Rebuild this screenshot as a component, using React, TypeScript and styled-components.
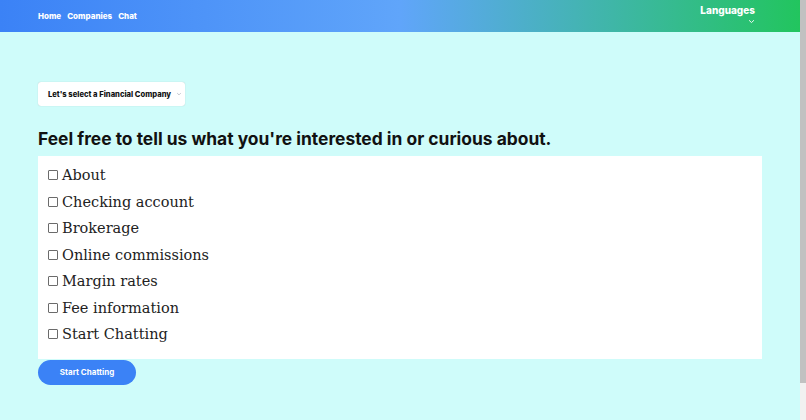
import styled, { createGlobalStyle } from 'styled-components';

const GlobalStyle = createGlobalStyle`
  html, body {
    margin: 0;
    padding: 0;
    height: 100%;
    overflow: hidden;
  }
  body {
    background:
      linear-gradient(180deg, #c1c1c1 383px, #f1f1f1 383px) right top / 6px 100% no-repeat,
      #cffcfa;
  }
  * {
    box-sizing: border-box;
  }
`;

const topics = [
  'About',
  'Checking account',
  'Brokerage',
  'Online commissions',
  'Margin rates',
  'Fee information',
  'Start Chatting',
];

function App() {
  return (
    <>
      <GlobalStyle />
      <Page>
        <NavBar>
          <NavLinks>
            <NavLink>Home</NavLink>
            <NavLink>Companies</NavLink>
            <NavLink>Chat</NavLink>
          </NavLinks>
          <LangMenu>
            <LangLabel>Languages</LangLabel>
            <LangChevron viewBox="0 0 10 6">
              <path d="M1.5 1.2 L5 4.5 L8.5 1.2" fill="none" stroke="#fff" strokeWidth="1.3" />
            </LangChevron>
          </LangMenu>
        </NavBar>
        <Main>
          <CompanySelect>
            <SelectText>Let's select a Financial Company</SelectText>
            <SelectChevron viewBox="0 0 10 6">
              <path d="M2 1.5 L5 4.5 L8 1.5" fill="none" stroke="#9ca3af" strokeWidth="1" />
            </SelectChevron>
          </CompanySelect>
          <Heading>Feel free to tell us what you're interested in or curious about.</Heading>
          <TopicCard>
            {topics.map((t) => (
              <TopicRow key={t}>
                <Box />
                <TopicLabel>{t}</TopicLabel>
              </TopicRow>
            ))}
          </TopicCard>
          <StartButton>Start Chatting</StartButton>
        </Main>
      </Page>
    </>
  );
}

export default App;

const Page = styled.div`
  width: 800px;
  display: flex;
  flex-direction: column;
`;

const NavBar = styled.nav`
  height: 32px;
  background: linear-gradient(90deg, #3b82f6 0%, #60a5fa 50%, #22c55e 100%);
  display: flex;
  justify-content: space-between;
  align-items: flex-start;
  padding: 0 45px 0 38px;
  font-family: Inter, "Liberation Sans", sans-serif;
  color: #fff;
`;

const NavLinks = styled.div`
  display: flex;
  gap: 6px;
  padding-top: 11px;
`;

const NavLink = styled.a`
  font-size: 8px;
  font-weight: 800;
  line-height: 10px;
  color: #fff;
  cursor: pointer;
`;

const LangMenu = styled.div`
  display: flex;
  flex-direction: column;
  align-items: flex-end;
  padding-top: 4px;
`;

const LangLabel = styled.span`
  font-size: 10px;
  font-weight: 800;
  line-height: 12px;
`;

const LangChevron = styled.svg`
  width: 7px;
  height: 5px;
  margin-top: 3px;
`;

const Main = styled.main`
  padding: 50px 38px 20px 38px;
  display: flex;
  flex-direction: column;
  align-items: flex-start;
`;

const CompanySelect = styled.div`
  width: 147px;
  height: 24px;
  background: #fff;
  border-radius: 3px;
  box-shadow: 0 0 1px rgba(0, 0, 0, 0.25);
  display: flex;
  align-items: center;
  justify-content: space-between;
  padding: 0 3px 0 10px;
`;

const SelectText = styled.span`
  font-family: Inter, "Liberation Sans", sans-serif;
  font-size: 7.6px;
  font-weight: 800;
  color: #111;
  white-space: nowrap;
`;

const SelectChevron = styled.svg`
  width: 6px;
  height: 4px;
`;

const Heading = styled.h2`
  margin: 23px 0 7px;
  font-family: Inter, "Liberation Sans", sans-serif;
  font-size: 17.4px;
  font-weight: 700;
  line-height: 20px;
  color: #111;
`;

const TopicCard = styled.div`
  align-self: stretch;
  background: #fff;
  padding: 6px 10px 11px;
  display: flex;
  flex-direction: column;
`;

const TopicRow = styled.label`
  display: flex;
  align-items: center;
  height: 26.5px;
`;

const Box = styled.span`
  width: 10px;
  height: 10px;
  border: 1px solid #6b6b6b;
  border-radius: 1px;
  margin-right: 4px;
  flex-shrink: 0;
`;

const TopicLabel = styled.span`
  font-family: "DejaVu Serif", "Liberation Serif", serif;
  font-size: 14.5px;
  color: #222;
`;

const StartButton = styled.button`
  margin-top: 1px;
  width: 98px;
  height: 25px;
  border: none;
  border-radius: 13px;
  background: #3b82f6;
  color: #fff;
  font-family: Inter, "Liberation Sans", sans-serif;
  font-size: 8px;
  font-weight: 700;
  cursor: pointer;
`;
